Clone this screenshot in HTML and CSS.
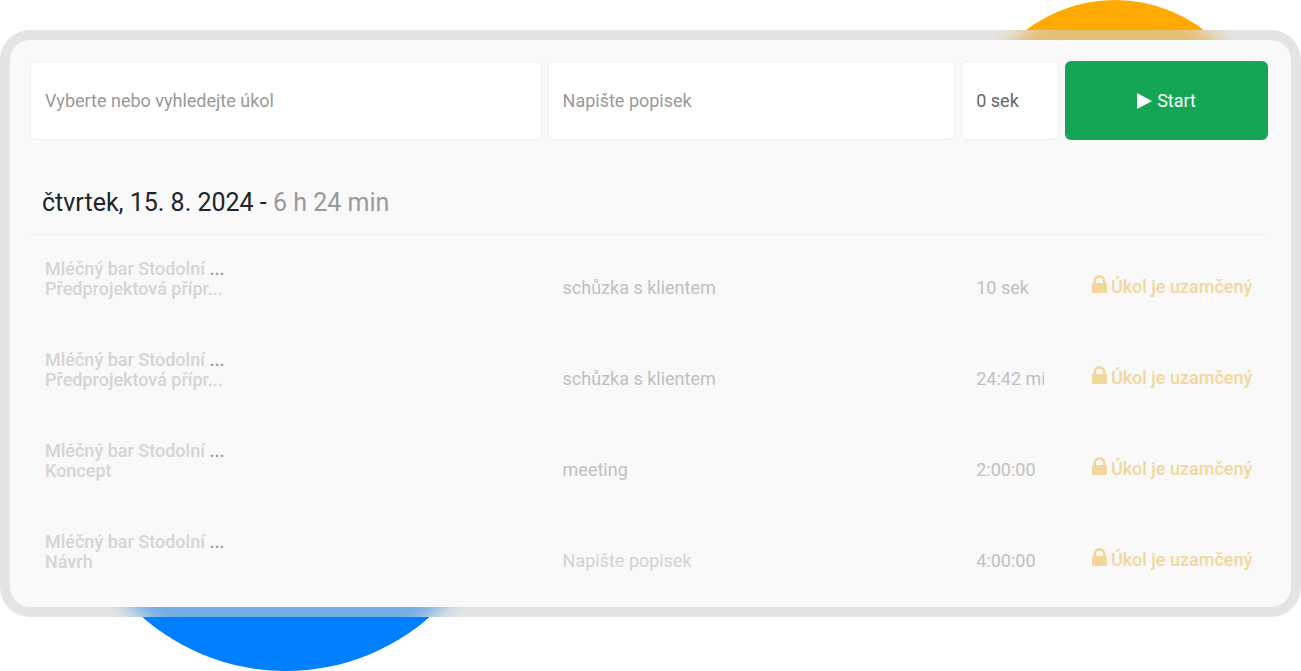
FILE: index.html
```
<!DOCTYPE html>
<html lang="cs">

<head>
    <meta charset="UTF-8" />
    <meta name="viewport" content="width=device-width, initial-scale=1.0" />
    <title>Měření času</title>
    <link rel="stylesheet" href="styles.css">
</head>

<body>
    <div class="tracker">
        <div class="backdrop">
            <div class="circle circle-orange"></div>
            <div class="circle circle-blue"></div>
        </div>
        <div class="frame">
            <div class="frame-blur">
                <div class="circle circle-orange"></div>
                <div class="circle circle-blue"></div>
            </div>
            <main class="panel">
                <form class="timer columns">
                    <input class="field" type="text" placeholder="Vyberte nebo vyhledejte úkol" aria-label="Úkol" />
                    <input class="field" type="text" placeholder="Napište popisek" aria-label="Popisek" />
                    <input class="field" type="text" value="0 sek" aria-label="Čas" />
                    <button class="start" type="button">
                        <svg width="15" height="16" viewBox="0 0 15 16" aria-hidden="true"><path d="M0 0 15 8 0 16z" fill="currentColor" /></svg>
                        Start
                    </button>
                </form>

                <h2 class="day">čtvrtek, 15. 8. 2024 - <span>6 h 24 min</span></h2>

                <ul class="entries">
                    <li class="entry columns">
                        <div class="task">
                            <p><span>Mléčný bar Stodolní</span> ...</p>
                            <p><span>Předprojektová přípr...</span></p>
                        </div>
                        <input class="value" type="text" value="schůzka s klientem" aria-label="Popisek" readonly />
                        <input class="value" type="text" value="10 sek" aria-label="Čas" readonly />
                        <div class="locked">
                            <svg width="15" height="18" viewBox="0 0 15 18" aria-hidden="true"><path d="M1.500 8V6a6 6 0 0 1 12 0V8h.5q1 0 1 1v8q0 1-1 1H1q-1 0-1-1V9q0-1 1-1zM4.200 8h6.600V6a3.300 3.300 0 0 0-6.600 0z" fill="currentColor" /></svg>
                            Úkol je uzamčený
                        </div>
                    </li>
                    <li class="entry columns">
                        <div class="task">
                            <p><span>Mléčný bar Stodolní</span> ...</p>
                            <p><span>Předprojektová přípr...</span></p>
                        </div>
                        <input class="value" type="text" value="schůzka s klientem" aria-label="Popisek" readonly />
                        <input class="value" type="text" value="24:42 min" aria-label="Čas" readonly />
                        <div class="locked">
                            <svg width="15" height="18" viewBox="0 0 15 18" aria-hidden="true"><path d="M1.500 8V6a6 6 0 0 1 12 0V8h.5q1 0 1 1v8q0 1-1 1H1q-1 0-1-1V9q0-1 1-1zM4.200 8h6.600V6a3.300 3.300 0 0 0-6.600 0z" fill="currentColor" /></svg>
                            Úkol je uzamčený
                        </div>
                    </li>
                    <li class="entry columns">
                        <div class="task">
                            <p><span>Mléčný bar Stodolní</span> ...</p>
                            <p><span>Koncept</span></p>
                        </div>
                        <input class="value" type="text" value="meeting" aria-label="Popisek" readonly />
                        <input class="value" type="text" value="2:00:00" aria-label="Čas" readonly />
                        <div class="locked">
                            <svg width="15" height="18" viewBox="0 0 15 18" aria-hidden="true"><path d="M1.500 8V6a6 6 0 0 1 12 0V8h.5q1 0 1 1v8q0 1-1 1H1q-1 0-1-1V9q0-1 1-1zM4.200 8h6.600V6a3.300 3.300 0 0 0-6.600 0z" fill="currentColor" /></svg>
                            Úkol je uzamčený
                        </div>
                    </li>
                    <li class="entry columns">
                        <div class="task">
                            <p><span>Mléčný bar Stodolní</span> ...</p>
                            <p><span>Návrh</span></p>
                        </div>
                        <input class="value" type="text" placeholder="Napište popisek" aria-label="Popisek" readonly />
                        <input class="value" type="text" value="4:00:00" aria-label="Čas" readonly />
                        <div class="locked">
                            <svg width="15" height="18" viewBox="0 0 15 18" aria-hidden="true"><path d="M1.500 8V6a6 6 0 0 1 12 0V8h.5q1 0 1 1v8q0 1-1 1H1q-1 0-1-1V9q0-1 1-1zM4.200 8h6.600V6a3.300 3.300 0 0 0-6.600 0z" fill="currentColor" /></svg>
                            Úkol je uzamčený
                        </div>
                    </li>
                </ul>
            </main>
        </div>
    </div>
</body>

</html>
```
FILE: styles.css
```
* {
    box-sizing: border-box;
}

body {
    margin: 0;
    background: #fff;
    font-family: Roboto, "Liberation Sans", sans-serif;
    font-size: 18px;
}

.tracker {
    position: relative;
    padding: 30px 0 54px;
    overflow: hidden;
}

/* circles behind the panel */
.backdrop {
    position: absolute;
    inset: 0;
}

.circle {
    position: absolute;
    border-radius: 50%;
}

.circle-orange {
    top: 0;
    right: 39px;
    width: 294px;
    height: 294px;
    background: #ffaa00;
}

.circle-blue {
    bottom: 0;
    left: 68px;
    width: 436px;
    height: 436px;
    background: #0080ff;
}

/* frosted frame: blurred copy of the circles, cut to the frame */
.frame {
    position: relative;
    padding: 10px;
    border-radius: 30px;
    background: #fff;
    overflow: hidden;
}

.frame-blur {
    position: absolute;
    inset: -30px 0 -54px;
}

.frame-blur .circle {
    filter: blur(10px);
}

.frame::before {
    content: "";
    position: absolute;
    inset: 0;
    z-index: 1;
    background: rgba(206, 206, 206, 0.56);
}

.panel {
    position: relative;
    z-index: 2;
    padding: 21px 23px 1px 20px;
    border-radius: 20px;
    background: #f9f9f9;
}

.columns {
    display: grid;
    grid-template-columns: 512fr 408fr 98fr 203fr;
    column-gap: 6px;
}

.field,
.value {
    width: 100%;
    min-width: 0;
    padding: 0 14px;
    border: 1px solid #efefef;
    border-radius: 6px;
    background: #fff;
    font: inherit;
    color: #666;
}

.field {
    height: 79px;
}

.field::placeholder {
    color: #999;
    opacity: 1;
}

.start {
    display: flex;
    align-items: center;
    justify-content: center;
    gap: 5px;
    border: none;
    border-radius: 6px;
    background: #14a555;
    color: #fff;
    font: inherit;
    cursor: pointer;
}

.day {
    margin: 47px 0 7px;
    padding: 0 12px 15px;
    border-bottom: 1px solid #f1f1f1;
    font-size: 25px;
    line-height: 32px;
    font-weight: 400;
    color: #212529;
}

.day span {
    color: #999;
}

.entries {
    margin: 0;
    padding: 0;
    list-style: none;
}

.entry {
    height: 91px;
    align-items: center;
}

.task {
    padding: 0 15px 18px;
    line-height: 20px;
    font-weight: 500;
    color: #999;
}

.task p {
    margin: 0;
}

.task span {
    color: #d5d5d5;
}

.value {
    border-color: transparent;
    background: none;
    color: #c0c0c0;
}

.value::placeholder {
    color: #d3d3d3;
    opacity: 1;
}

.locked {
    display: flex;
    align-items: center;
    justify-content: center;
    gap: 4px;
    padding: 0 0 3px 11px;
    font-weight: 500;
    white-space: nowrap;
    color: #f2d79c;
}

.locked svg {
    margin-bottom: 4px;
}
```
